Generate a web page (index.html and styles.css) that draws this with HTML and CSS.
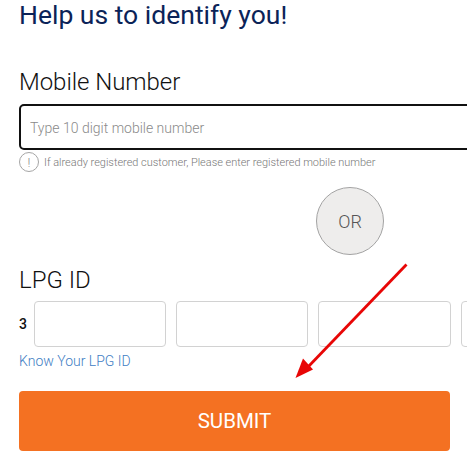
FILE: index.html
```html
<!DOCTYPE html>
<html lang="en">
<head>
<meta charset="utf-8">
<title>Help us to identify you</title>
<link rel="stylesheet" href="styles.css">
</head>
<body>
<main class="page">
  <h1 class="title">Help us to identify you!</h1>
  <label class="label label-mobile" for="mobile">Mobile Number</label>
  <input class="mobile-input" id="mobile" type="text" placeholder="Type 10 digit mobile number">
  <div class="hint">
    <span class="hint-icon">!</span>
    <span>If already registered customer, Please enter registered mobile number</span>
  </div>
  <div class="or-row"><div class="or">OR</div></div>
  <label class="label label-lpg">LPG ID</label>
  <div class="lpg-row">
    <span class="prefix">3</span>
    <input class="box box-a" type="text">
    <input class="box box-a" type="text">
    <input class="box box-b" type="text">
    <input class="box box-a" type="text">
  </div>
  <a class="know" href="#">Know Your LPG ID</a>
  <button class="submit" type="button">SUBMIT</button>
</main>
<svg class="arrow" width="467" height="457" viewBox="0 0 467 457" aria-hidden="true">
  <line x1="406.500" y1="264.500" x2="307" y2="368" stroke="#e80606" stroke-width="2.800"/>
  <polygon points="295.500,378 303,358.500 313,369.500" fill="#e80606"/>
</svg>
</body>
</html>
```
FILE: styles.css
```css
html, body {
  margin: 0;
  padding: 0;
  background: #fff;
  width: 467px;
  height: 457px;
  overflow: hidden;
}
body {
  position: relative;
  font-family: Roboto, "Liberation Sans", sans-serif;
}
.page {
  width: 467px;
  height: 457px;
  padding-left: 19px;
  box-sizing: border-box;
  overflow: hidden;
}
.title {
  margin: 0;
  height: 68px;
  font-size: 26.500px;
  line-height: 30px;
  font-weight: 400;
  color: #0b2358;
}
.label {
  display: block;
  font-size: 24px;
  line-height: 28px;
  font-weight: 300;
  color: #111;
}
.label-mobile {
  height: 36px;
  letter-spacing: -0.050px;
}
.mobile-input {
  display: block;
  box-sizing: border-box;
  width: 500px;
  height: 46px;
  padding: 2px 9px 0;
  border: 2px solid #111;
  border-radius: 5px;
  outline: none;
  font: 300 14px Roboto, sans-serif;
  background: #fff;
}
.mobile-input::placeholder {
  color: #8a8a8a;
  opacity: 1;
}
.hint {
  display: flex;
  align-items: center;
  gap: 5px;
  margin-top: 2px;
  height: 20px;
  font-size: 10.950px;
  font-weight: 300;
  color: #777;
}
.hint-icon {
  box-sizing: border-box;
  width: 20px;
  height: 20px;
  border: 1px solid #a5a5a5;
  border-radius: 50%;
  display: flex;
  align-items: center;
  justify-content: center;
  font-size: 13px;
  color: #888;
}
.or-row {
  margin-top: 15px;
  padding-left: 297px;
}
.or {
  box-sizing: border-box;
  width: 68px;
  height: 68px;
  border: 1px solid #a3a3a3;
  border-radius: 50%;
  background: #eeedec;
  color: #555;
  display: flex;
  align-items: center;
  justify-content: center;
  font-size: 18px;
  font-weight: 300;
}
.label-lpg {
  margin-top: 11px;
  height: 35px;
}
.lpg-row {
  display: flex;
  align-items: center;
  width: 500px;
}
.prefix {
  flex: none;
  width: 15px;
  font-size: 14px;
  font-weight: 500;
  color: #111;
}
.box {
  box-sizing: border-box;
  height: 46px;
  border: 1px solid #d2d2d2;
  border-radius: 4px;
  background: #fff;
  padding: 0;
  margin-right: 10px;
  flex: none;
}
.box-a { width: 132px; }
.box-b { width: 133px; }
.know {
  display: block;
  margin-top: 5px;
  font-size: 14px;
  line-height: 18px;
  font-weight: 300;
  color: #3f80c4;
  text-decoration: none;
}
.submit {
  display: block;
  margin-top: 21px;
  width: 431px;
  height: 60px;
  border: 0;
  border-radius: 4px;
  background: #f47122;
  color: #fff;
  font: 400 20.500px Roboto, sans-serif;
  padding: 0;
}
.arrow {
  position: absolute;
  left: 0;
  top: 0;
  pointer-events: none;
}
```
